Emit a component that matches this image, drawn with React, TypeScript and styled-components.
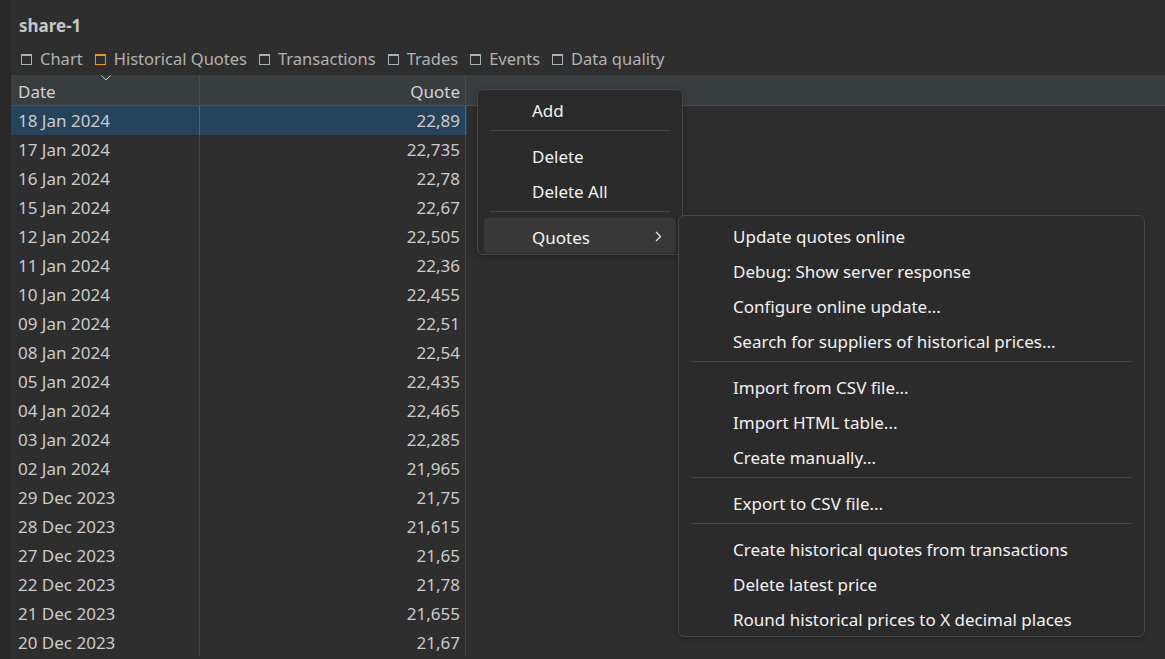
import React from 'react';
import styled, { createGlobalStyle } from 'styled-components';

const GlobalStyle = createGlobalStyle`
  html, body {
    margin: 0;
    padding: 0;
    background: #2e2e2e;
    overflow: hidden;
  }
  body {
    font-family: 'Noto Sans', 'Liberation Sans', sans-serif;
    font-size: 17px;
  }
`;

const rows: [string, string][] = [
  ['18 Jan 2024', '22,89'],
  ['17 Jan 2024', '22,735'],
  ['16 Jan 2024', '22,78'],
  ['15 Jan 2024', '22,67'],
  ['12 Jan 2024', '22,505'],
  ['11 Jan 2024', '22,36'],
  ['10 Jan 2024', '22,455'],
  ['09 Jan 2024', '22,51'],
  ['08 Jan 2024', '22,54'],
  ['05 Jan 2024', '22,435'],
  ['04 Jan 2024', '22,465'],
  ['03 Jan 2024', '22,285'],
  ['02 Jan 2024', '21,965'],
  ['29 Dec 2023', '21,75'],
  ['28 Dec 2023', '21,615'],
  ['27 Dec 2023', '21,65'],
  ['22 Dec 2023', '21,78'],
  ['21 Dec 2023', '21,655'],
  ['20 Dec 2023', '21,67'],
];

const tabs = ['Chart', 'Historical Quotes', 'Transactions', 'Trades', 'Events', 'Data quality'];

type MenuEntry = string | null;

const quoteMenu: MenuEntry[] = [
  'Update quotes online',
  'Debug: Show server response',
  'Configure online update...',
  'Search for suppliers of historical prices...',
  null,
  'Import from CSV file...',
  'Import HTML table...',
  'Create manually...',
  null,
  'Export to CSV file...',
  null,
  'Create historical quotes from transactions',
  'Delete latest price',
  'Round historical prices to X decimal places',
];

const Page = styled.div`
  position: relative;
  display: flex;
  width: 1165px;
  height: 659px;
  overflow: hidden;
`;

const Gutter = styled.div`
  width: 11px;
  flex: none;
  background: #282828;
`;

const Main = styled.div`
  flex: 1;
  display: flex;
  flex-direction: column;
  min-width: 0;
`;

const Title = styled.div`
  height: 47px;
  padding-left: 8px;
  display: flex;
  align-items: center;
  padding-top: 4px;
  box-sizing: border-box;
  color: #c6c6c6;
  font-weight: 700;
  font-size: 17px;
`;

const TabBar = styled.div`
  display: flex;
  align-items: center;
  gap: 12px;
  height: 26px;
  padding-left: 10px;
  box-sizing: border-box;
`;

const Tab = styled.div`
  display: flex;
  align-items: center;
  gap: 8px;
  color: #b2b2b2;
  font-size: 16.5px;
  margin-top: -3px;
`;

const TabIcon = styled.span<{ $active?: boolean }>`
  width: 9px;
  height: 8px;
  border: 1px solid ${(p) => (p.$active ? '#f5930f' : '#a8b0b8')};
  border-top-width: 2px;
  margin-top: 1px;
`;

const Table = styled.div`
  display: flex;
  flex-direction: column;
  margin-top: 2px;
`;

const HeaderRow = styled.div`
  position: relative;
  display: grid;
  grid-template-columns: 189px 266px 1fr;
  height: 30px;
  background: #383d40;
  border-bottom: 1px solid #4a4e51;
  color: #d2d2d2;
`;

const HeaderCell = styled.div<{ $align?: 'left' | 'right' }>`
  display: flex;
  align-items: flex-end;
  justify-content: ${(p) => (p.$align === 'right' ? 'flex-end' : 'flex-start')};
  padding: 0 5px 2px 7px;
  border-right: 1px solid #4a4e51;
`;

const SortCaret = styled.svg`
  position: absolute;
  left: 90px;
  top: 0px;
`;

const Row = styled.div<{ $selected?: boolean }>`
  display: grid;
  grid-template-columns: 189px 266px;
  height: 29px;
  background: ${(p) => (p.$selected ? '#26435a' : 'transparent')};
  width: 456px;
  color: #cbcbcb;
`;

const Cell = styled.div<{ $align?: 'left' | 'right'; $selected?: boolean }>`
  display: flex;
  align-items: center;
  justify-content: ${(p) => (p.$align === 'right' ? 'flex-end' : 'flex-start')};
  padding: 0 5px 0 7px;
  border-right: 1px solid ${(p) => (p.$selected ? '#3f6a8c' : '#3e4348')};
`;

const Menu = styled.div<{ $left: number; $top: number; $width: number }>`
  position: absolute;
  left: ${(p) => p.$left}px;
  top: ${(p) => p.$top}px;
  width: ${(p) => p.$width}px;
  box-sizing: border-box;
  padding: 1px 0;
  background: #2b2b2b;
  border: 1px solid #464646;
  border-radius: 6px;
  box-shadow: 0 2px 6px rgba(0, 0, 0, 0.25);
  color: #f2f2f2;
  display: flex;
  flex-direction: column;
`;

const MenuItem = styled.div<{ $hover?: boolean }>`
  position: relative;
  height: 35px;
  margin: 0 6px;
  padding-left: 48px;
  padding-top: 3px;
  box-sizing: border-box;
  display: flex;
  align-items: center;
  border-radius: 4px;
  background: ${(p) => (p.$hover ? '#383838' : 'transparent')};
  font-size: 17px;
`;

const Chevron = styled.svg`
  position: absolute;
  right: 14px;
  top: 13px;
`;

const Separator = styled.div`
  height: 1px;
  margin: 4px 12px 6px;
  background: #444444;
`;

export default function App() {
  return (
    <>
      <GlobalStyle />
      <Page>
        <Gutter />
        <Main>
          <Title>share-1</Title>
          <TabBar>
            {tabs.map((t) => (
              <Tab key={t}>
                <TabIcon $active={t === 'Historical Quotes'} />
                {t}
              </Tab>
            ))}
          </TabBar>
          <Table>
            <HeaderRow>
              <HeaderCell>Date</HeaderCell>
              <HeaderCell $align="right">Quote</HeaderCell>
              <div />
              <SortCaret width="10" height="6" viewBox="0 0 10 6">
                <path d="M0.5 0.5 L5 5 L9.5 0.5" fill="none" stroke="#c8c8c8" strokeWidth="1" />
              </SortCaret>
            </HeaderRow>
            {rows.map(([d, q], i) => (
              <Row key={d} $selected={i === 0}>
                <Cell $selected={i === 0}>{d}</Cell>
                <Cell $align="right" $selected={i === 0}>{q}</Cell>
              </Row>
            ))}
          </Table>
        </Main>

        <Menu $left={477} $top={89} $width={206}>
          <MenuItem>Add</MenuItem>
          <Separator />
          <MenuItem>Delete</MenuItem>
          <MenuItem>Delete All</MenuItem>
          <Separator />
          <MenuItem $hover>
            Quotes
            <Chevron width="7" height="11" viewBox="0 0 7 11">
              <path d="M1 1 L5.5 5.5 L1 10" fill="none" stroke="#e6e6e6" strokeWidth="1.3" />
            </Chevron>
          </MenuItem>
        </Menu>

        <Menu $left={678} $top={215} $width={467}>
          {quoteMenu.map((m, i) =>
            m === null ? <Separator key={i} /> : <MenuItem key={i}>{m}</MenuItem>
          )}
        </Menu>
      </Page>
    </>
  );
}
